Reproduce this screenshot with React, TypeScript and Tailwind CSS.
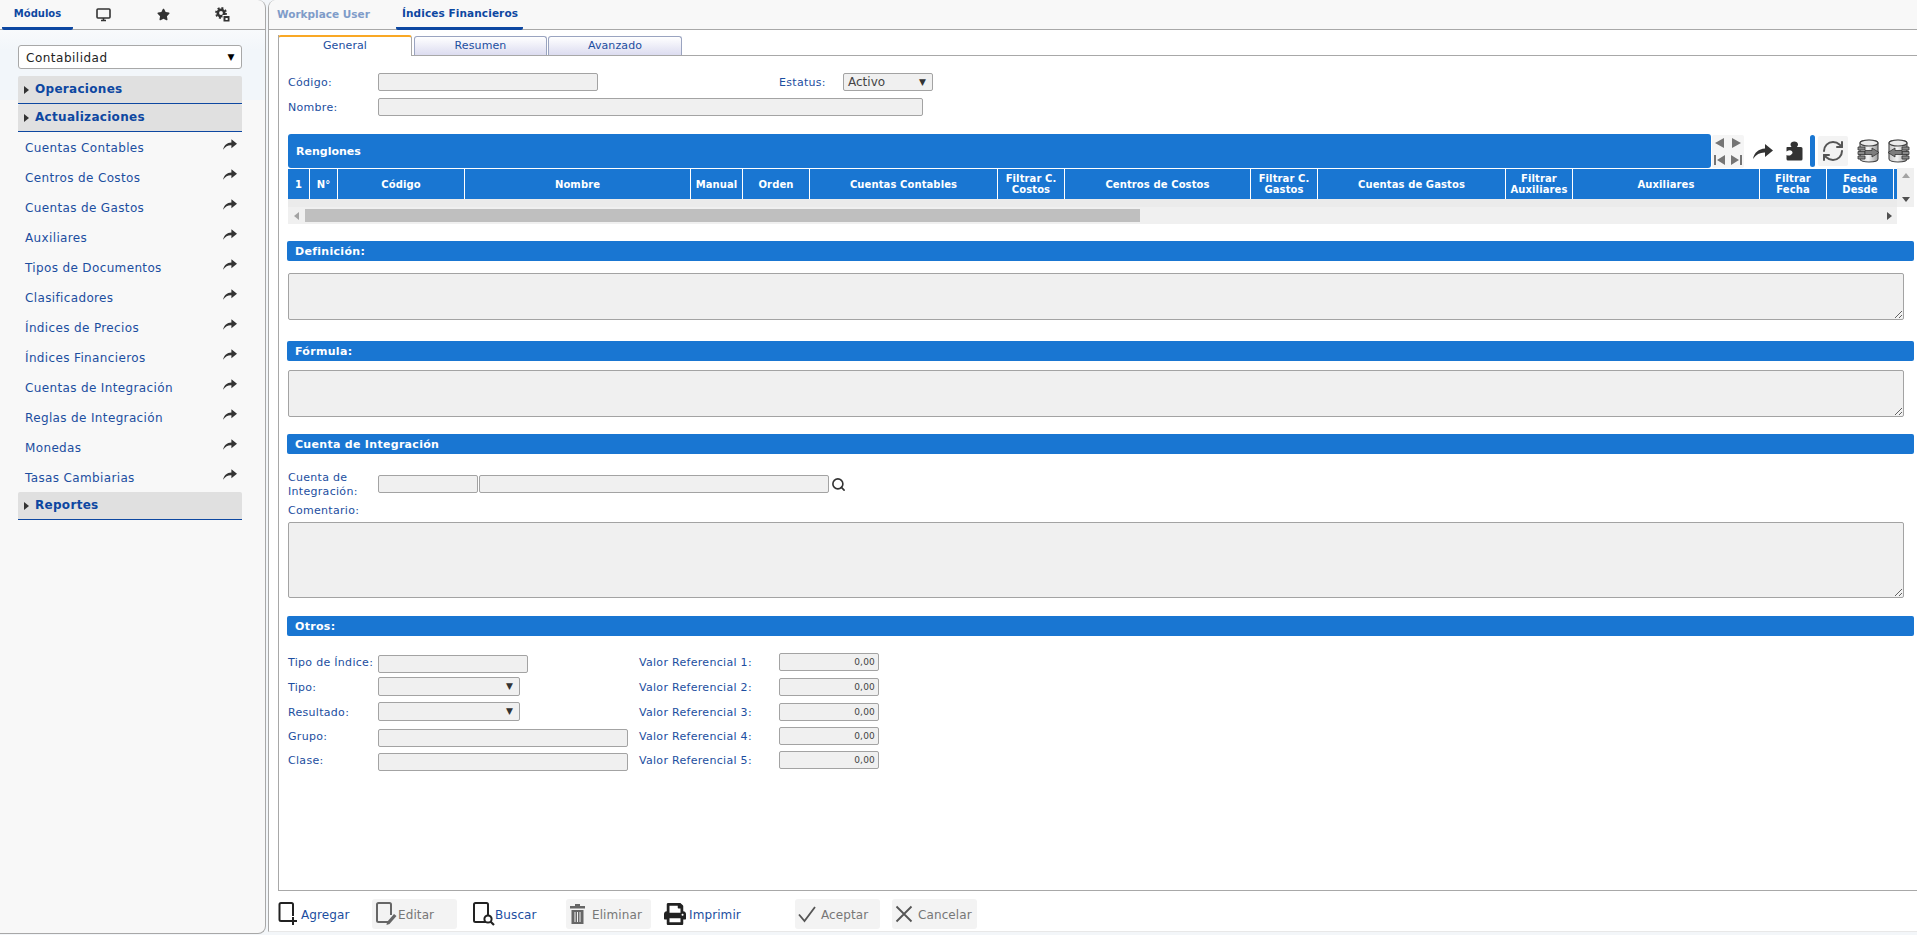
import React from "react";
import { FaStar, FaPrint } from "react-icons/fa";
import { RefreshCw, Search } from "lucide-react";

const menuItems = [
  "Cuentas Contables", "Centros de Costos", "Cuentas de Gastos", "Auxiliares",
  "Tipos de Documentos", "Clasificadores", "Índices de Precios", "Índices Financieros",
  "Cuentas de Integración", "Reglas de Integración", "Monedas", "Tasas Cambiarias",
];

const columns: [string, number][] = [
  ["1", 22], ["N°", 28], ["Código", 127], ["Nombre", 226], ["Manual", 52], ["Orden", 67],
  ["Cuentas Contables", 188], ["Filtrar C. Costos", 67], ["Centros de Costos", 186],
  ["Filtrar C. Gastos", 67], ["Cuentas de Gastos", 188], ["Filtrar Auxiliares", 67],
  ["Auxiliares", 187], ["Filtrar Fecha", 67], ["Fecha Desde", 67],
];

function Caret() {
  return <span className="text-[9px] leading-none text-[#333]">▼</span>;
}

function Share({ w, h, className = "" }: { w: number; h: number; className?: string }) {
  return (
    <svg width={w} height={h} viewBox="0 0 20 15" className={className}>
      <path d="M0 15 C1.5 8.5 5.5 5 12 4.6 V0 L20 6.6 L12 13 V8.6 C7 8.4 3.5 10.5 0 15 Z" fill="#333" />
    </svg>
  );
}

function Puzzle() {
  return (
    <svg width="17" height="20" viewBox="0 0 17 20">
      <path
        d="M1 6 H5.5 C5 5 4.5 4.5 4.5 3.5 C4.5 1.5 6.3 0.5 8.3 0.5 C10.3 0.5 12 1.5 12 3.5 C12 4.5 11.5 5 11 6 H15 Q16.5 6 16.5 7.5 V18 Q16.5 19.5 15 19.5 H2 Q0.5 19.5 0.5 18 V14 C2 14.8 3.6 14.8 4.8 14 C6 13.3 6.5 12.6 6.5 11.6 C6.5 10.2 5.4 9.2 3.9 9.2 C2.8 9.2 1.8 9.6 0.5 10.4 V7 Q0.5 6 1 6 Z"
        fill="#333"
      />
    </svg>
  );
}

function MenuHeader({ label }: { label: string }) {
  return (
    <div className="mx-[18px] w-[224px] h-[28px] flex items-center bg-[#e0e0e0] border-b border-[#0d47a1] pl-[6px] rounded-t-[2px]">
      <svg width="5" height="8" viewBox="0 0 5 8" className="mr-[6px]"><path d="M0 0 L5 4 L0 8 Z" fill="#333" /></svg>
      <span className="text-[12px] font-bold text-[#0d47a1] tracking-[0.3px] pb-[2px]">{label}</span>
    </div>
  );
}

function Field({ w, h = 18, right, ml = 0 }: { w: number; h?: number; right?: string; ml?: number }) {
  return (
    <input
      readOnly
      value={right ?? ""}
      style={{ width: w, height: h, marginLeft: ml }}
      className="shrink-0 bg-[#f0f0f0] border border-[#a3a3a3] rounded-[2px] text-right pr-[3px] text-[9px] tracking-[0.2px] text-[#444] outline-none"
    />
  );
}

function Select({ w, h = 18, text }: { w: number; h?: number; text?: string }) {
  return (
    <div style={{ width: w, height: h }} className="shrink-0 bg-[#f0f0f0] border border-[#a3a3a3] rounded-[2px] flex items-center justify-between pl-[4px] pr-[6px] text-[12px] text-[#444]">
      <span>{text}</span>
      <Caret />
    </div>
  );
}

function Section({ title, className }: { title: string; className: string }) {
  return (
    <div className={`w-[1627px] -ml-px h-[20px] bg-[#1976d2] rounded-[2px] flex items-center pl-[8px] pt-[2px] text-white text-[11px] tracking-[0.3px] font-bold ${className}`}>
      {title}
    </div>
  );
}

function Area({ h, className }: { h: number; className: string }) {
  return (
    <textarea
      readOnly
      style={{ height: h }}
      className={`block w-[1616px] bg-[#f0f0f0] border border-[#a3a3a3] rounded-[2px] outline-none ${className}`}
    />
  );
}

function Tri({ d }: { d: string }) {
  return (
    <svg width="12" height="12" viewBox="0 0 12 12"><path d={d} fill="#757575" /></svg>
  );
}

function Db({ out }: { out: boolean }) {
  const id = out ? "dbA" : "dbB";
  return (
    <svg width="24" height="26" viewBox="0 0 24 26">
      <defs>
        <linearGradient id={id} x1="0" x2="1" y1="0" y2="0">
          <stop offset="0" stopColor="#c4c4c4" />
          <stop offset="0.45" stopColor="#f4f4f4" />
          <stop offset="1" stopColor="#9c9c9c" />
        </linearGradient>
      </defs>
      <path d="M3 5 C3 1.5 21 1.5 21 5 L21 21 C21 25 3 25 3 21 Z" fill={`url(#${id})`} stroke="#444" strokeWidth="1.1" />
      <ellipse cx="12" cy="5" rx="9" ry="3" fill="#ececec" stroke="#444" strokeWidth="1.1" />
      {out ? (
        <>
          <path d="M1 9 H8 V12 H1 Z M1 13.5 H8 V16.5 H1 Z M1 18 H8 V21 H1 Z" fill="#8a8a8a" stroke="#333" strokeWidth="0.8" />
          <path d="M8 12.5 H15 V10 L22 14.5 L15 19 V16.5 H8 Z" fill="#7d7d7d" stroke="#333" strokeWidth="0.8" />
        </>
      ) : (
        <>
          <path d="M16 9 H23 V12 H16 Z M16 13.5 H23 V16.5 H16 Z M16 18 H23 V21 H16 Z" fill="#8a8a8a" stroke="#333" strokeWidth="0.8" />
          <path d="M16 12.5 H9 V10 L2 14.5 L9 19 V16.5 H16 Z" fill="#7d7d7d" stroke="#333" strokeWidth="0.8" />
        </>
      )}
    </svg>
  );
}

function DocIcon({ color, children }: { color: string; children?: React.ReactNode }) {
  return (
    <svg width="24" height="26" viewBox="0 0 24 26" fill="none" className="shrink-0">
      <path d="M14 21 H3.5 Q2 21 2 19.5 V3.5 Q2 2 3.5 2 H14.5 Q16 2 16 3.5 V14" stroke={color} strokeWidth="2" />
      {children}
    </svg>
  );
}

function Action({ icon, label, w, disabled, gap = 3, className = "" }: { icon: React.ReactNode; label: string; w: number; disabled?: boolean; gap?: number; className?: string }) {
  return (
    <div
      style={{ width: w }}
      className={`h-[30px] shrink-0 flex items-center pl-[3px] rounded-[3px] text-[12px] tracking-[0.1px] ${disabled ? "bg-[#f3f3f3] text-[#777]" : "text-[#1c4ea0]"} ${className}`}
    >
      {icon}
      <span style={{ marginLeft: gap }} className="pt-[2px]">{label}</span>
    </div>
  );
}

export default function App() {
  const labelCls = "text-[11px] text-[#1c4ea0] shrink-0 tracking-[0.3px]";
  const rows: [React.ReactNode, string, React.ReactNode, string][] = [
    ["Tipo de Índice:", "h-[18px]", <Field w={150} />, "1"],
    ["Tipo:", "h-[19px]", <Select w={142} h={19} />, "2"],
    ["Resultado:", "h-[19px]", <Select w={142} h={19} />, "3"],
    ["Grupo:", "h-[18px]", <Field w={250} />, "4"],
    ["Clase:", "h-[18px]", <Field w={250} />, "5"],
  ];
  return (
    <div className="flex w-[1917px] h-[935px] overflow-hidden bg-[#f3f6f9] [font-family:'DejaVu_Sans',sans-serif]">
      {/* Sidebar */}
      <aside className="w-[266px] h-[934px] shrink-0 border-r border-b border-[#a8a8a8] rounded-r-[8px] flex flex-col bg-[linear-gradient(180deg,#f8f8f8_0,#f8f8f8_29px,#f8fafc_30px,#f2f6fa_50px,#f2f6fa_100px,#f8f8f8_100px)]">
        <div className="h-[30px] shrink-0 border-b border-[#a8a8a8] flex">
          <div className="ml-[2px] w-[71px] h-[30px] rounded-b-[2px] border-b-[3px] border-[#0d47a1] flex items-center justify-center text-[10px] font-bold text-[#0d47a1]">Módulos</div>
          <div className="w-[60px] flex items-center justify-center text-[#333]">
            <svg width="15" height="14" viewBox="0 0 15 14" fill="none">
              <rect x="1" y="1" width="13" height="9" rx="1" stroke="#333" strokeWidth="1.6" />
              <path d="M5 12.5 H10 M7.5 10 V12.5" stroke="#333" strokeWidth="1.6" />
            </svg>
          </div>
          <div className="w-[60px] flex items-center justify-center text-[#333]"><FaStar size={13} /></div>
          <div className="w-[60px] flex items-center justify-center">
            <svg width="16" height="16" viewBox="0 0 16 16" fill="none">
              <circle cx="6" cy="6" r="3.2" stroke="#333" strokeWidth="2.6" />
              <circle cx="6" cy="6" r="5" stroke="#333" strokeWidth="1.8" strokeDasharray="2 1.9" />
              <rect x="8" y="8.5" width="7" height="6.5" fill="#333" stroke="#f8f8f8" strokeWidth="1" />
              <rect x="10.5" y="11" width="2.2" height="2" fill="#f8f8f8" />
            </svg>
          </div>
        </div>
        <div className="mx-[18px] mt-[15px] w-[224px] h-[24px] bg-white border border-[#a8a8a8] rounded-[3px] flex items-center justify-between pl-[7px] pr-[6px] text-[12px] tracking-[0.5px] text-[#222] shrink-0">
          <span className="pt-[1px]">Contabilidad</span>
          <span className="text-[9px] leading-none text-black">▼</span>
        </div>
        <div className="mt-[7px]"><MenuHeader label="Operaciones" /></div>
        <MenuHeader label="Actualizaciones" />
        <div className="flex flex-col">
          {menuItems.map((m) => (
            <div key={m} className="mx-[18px] w-[224px] h-[30px] flex items-center justify-between pl-[7px] pr-[5px] text-[12px] tracking-[0.36px] text-[#1c4ea0]">
              <span className="pt-[2px]">{m}</span>
              <Share w={14} h={11} className="mb-[6px]" />
            </div>
          ))}
        </div>
        <MenuHeader label="Reportes" />
      </aside>

      {/* Main */}
      <main className="ml-[2px] flex-1 h-[932px] bg-white border-l border-b border-l-[#a8a8a8] border-b-[#e8e8e8] rounded-tl-[8px] flex flex-col">
        <div className="h-[30px] shrink-0 bg-[#f8f8f8] border-b border-[#a8a8a8] rounded-tl-[8px] flex pl-[3px]">
          <div className="w-[124px] flex items-center pl-[5px] text-[10.5px] font-bold text-[#7f9cc9]">Workplace User</div>
          <div className="w-[127px] h-[30px] border-b-[3px] border-[#0d47a1] rounded-b-[2px] flex items-center pl-[6px] text-[10.5px] tracking-[0.1px] font-bold text-[#0d47a1] whitespace-nowrap">Índices Financieros</div>
        </div>

        {/* Panel */}
        <div className="ml-[9px] mt-[5px] h-[856px] shrink-0 border-l border-b border-[#a8a8a8] flex flex-col">
          <div className="h-[21px] shrink-0 flex items-end border-b border-[#a8a8a8] -ml-px">
            <div className="w-[134px] h-[21px] -mb-px bg-white border-t-2 border-t-[#f9a825] border-x border-x-[#a8a8a8] rounded-t-[3px] flex items-center justify-center text-[11px] tracking-[0.1px] text-[#1c4ea0]">General</div>
            <div className="ml-[2px] w-[133px] h-[19px] border border-[#9aa4c0] border-b-0 rounded-t-[3px] bg-[linear-gradient(180deg,#ffffff,#dcdcf0)] flex items-center justify-center text-[11px] tracking-[0.1px] text-[#1c4ea0]">Resumen</div>
            <div className="ml-px w-[134px] h-[19px] border border-[#9aa4c0] border-b-0 rounded-t-[3px] bg-[linear-gradient(180deg,#ffffff,#dcdcf0)] flex items-center justify-center text-[11px] tracking-[0.1px] text-[#1c4ea0]">Avanzado</div>
          </div>

          <div className="pl-[9px] flex flex-col flex-1">
            <div className="mt-[17px] flex items-center h-[18px]">
              <span className={`${labelCls} w-[90px] pt-[3px]`}>Código:</span>
              <Field w={220} />
              <span className={`${labelCls} ml-[181px] w-[64px] pt-[3px]`}>Estatus:</span>
              <Select w={90} text="Activo" />
            </div>
            <div className="mt-[7px] flex items-center h-[18px]">
              <span className={`${labelCls} w-[90px] pt-[3px]`}>Nombre:</span>
              <Field w={545} />
            </div>

            {/* Grid */}
            <div className="mt-[18px] flex h-[34px] w-[1626px]">
              <div className="w-[1423px] h-[34px] bg-[#1976d2] rounded-[3px] flex items-center pl-[8px] pt-[2px] text-white text-[11px] font-bold">Renglones</div>
              <div className="ml-[1px] w-[32px] h-[33px] mt-[1px] bg-[#f5f5f5] rounded-[2px] grid grid-cols-2 place-items-center">
                <Tri d="M10 1 V11 L1 6 Z" />
                <Tri d="M2 1 V11 L11 6 Z" />
                <Tri d="M0 1 H2 V11 H0 Z M11 1 V11 L3 6 Z" />
                <Tri d="M12 1 H10 V11 H12 Z M1 1 V11 L9 6 Z" />
              </div>
              <div className="ml-[8px] w-[22px] h-[34px] flex items-center justify-center"><Share w={20} h={15} /></div>
              <div className="ml-[10px] w-[20px] h-[34px] flex items-center justify-center"><Puzzle /></div>
              <div className="ml-[6px] w-[5px] h-[32px] mt-[1px] bg-[#1976d2] rounded-[3px]" />
              <div className="ml-[3px] w-[30px] h-[30px] mt-[2px] bg-[#f3f3f3] rounded-[2px] flex items-center justify-center text-[#555]"><RefreshCw size={24} strokeWidth={2} /></div>
              <div className="ml-[9px] w-[24px] h-[34px] flex items-center justify-center"><Db out /></div>
              <div className="ml-[5px] w-[24px] h-[34px] flex items-center justify-center"><Db out={false} /></div>
            </div>
            <div className="flex w-[1626px]">
              <div className="w-[1609px]">
                <div className="flex h-[31px] border-t border-white bg-[#1976d2]">
                  {columns.map(([name, w]) => (
                    <div key={name} style={{ width: w }} className="shrink-0 border-r border-white flex items-center justify-center text-center text-white text-[10px] tracking-[0.1px] leading-[11px] font-bold">
                      <span className="block">{name}</span>
                    </div>
                  ))}
                </div>
                <div className="h-[8px] bg-[#ebebeb]" />
                <div className="h-[17px] bg-[#f0f0f0] flex items-center">
                  <div className="w-[17px] flex justify-center">
                    <svg width="5" height="8" viewBox="0 0 5 8"><path d="M5 0 L0 4 L5 8 Z" fill="#a3a3a3" /></svg>
                  </div>
                  <div className="w-[835px] h-[13px] bg-[#bfbfbf]" />
                  <div className="flex-1 flex justify-end pr-[5px]">
                    <svg width="5" height="8" viewBox="0 0 5 8"><path d="M0 0 L5 4 L0 8 Z" fill="#505050" /></svg>
                  </div>
                </div>
              </div>
              <div className="w-[17px] h-[39px] bg-[#f0f0f0] flex flex-col items-center justify-between py-[5px]">
                <svg width="8" height="5" viewBox="0 0 8 5"><path d="M0 5 L4 0 L8 5 Z" fill="#a3a3a3" /></svg>
                <svg width="8" height="5" viewBox="0 0 8 5"><path d="M0 0 L4 5 L8 0 Z" fill="#505050" /></svg>
              </div>
            </div>

            <Section title="Definición:" className="mt-[17px]" />
            <Area h={47} className="mt-[12px]" />
            <Section title="Fórmula:" className="mt-[21px]" />
            <Area h={47} className="mt-[9px]" />
            <Section title="Cuenta de Integración" className="mt-[17px]" />

            <div className="mt-[21px] flex items-center h-[18px]">
              <span className={`${labelCls} w-[90px] leading-[14px] pt-[2px]`}>Cuenta de<br />Integración:</span>
              <Field w={100} />
              <Field w={350} ml={1} />
              <Search size={15} strokeWidth={2.6} className="ml-[2px] text-[#333]" />
            </div>
            <div className={`${labelCls} mt-[10px] h-[14px] leading-[14px] pt-[1px]`}>Comentario:</div>
            <Area h={76} className="mt-[5px]" />
            <Section title="Otros:" className="mt-[18px]" />

            <div className="mt-[17px] flex flex-col gap-y-[6px]">
              {rows.map(([label, hCls, ctrl, n]) => (
                <div key={n} className={`flex items-center ${hCls}`}>
                  <span className={`${labelCls} w-[90px] pt-[3px]`}>{label}</span>
                  <div className="w-[261px] shrink-0">{ctrl}</div>
                  <span className={`${labelCls} w-[140px] pt-[3px]`}>{`Valor Referencial ${n}:`}</span>
                  <Field w={100} right="0,00" />
                </div>
              ))}
            </div>
          </div>
        </div>

        {/* Toolbar */}
        <div className="ml-[9px] mt-[8px] flex items-center h-[30px]">
          <Action w={94} gap={2} label="Agregar" icon={
            <svg width="21" height="26" viewBox="0 0 21 26" fill="none" className="-ml-[3px]">
              <path d="M12 20 H3 Q1.5 20 1.5 18.5 V3.5 Q1.5 2 3 2 H13.5 Q15 2 15 3.5 V15" stroke="#222" strokeWidth="2" />
              <path d="M15 16 V24 M11 20 H19" stroke="#222" strokeWidth="2" />
            </svg>
          } />
          <Action w={85} disabled gap={-1} label="Editar" icon={
            <DocIcon color="#666"><path d="M12 21 L19 13 L21.5 15 L14.5 23 L11.5 24 Z" fill="#666" /></DocIcon>
          } />
          <Action w={97} className="ml-[12px]" gap={-1} label="Buscar" icon={
            <DocIcon color="#222"><circle cx="16" cy="18" r="3.6" stroke="#222" strokeWidth="2" /><path d="M18.5 20.5 L22 24" stroke="#222" strokeWidth="2.2" /></DocIcon>
          } />
          <Action w={85} disabled gap={6} label="Eliminar" icon={
            <svg width="17" height="22" viewBox="0 0 17 22"><path d="M1 3 H6 V1 H11 V3 H16 V5.5 H1 Z M2.5 7 H14.5 V21 H2.5 Z" fill="#666" /><path d="M6 9 V19 M8.5 9 V19 M11 9 V19" stroke="#f3f3f3" strokeWidth="1" /></svg>
          } />
          <Action w={134} className="ml-[10px]" label="Imprimir" icon={<FaPrint size={22} className="text-[#222]" />} />
          <Action w={85} disabled gap={5} label="Aceptar" icon={
            <svg width="18" height="18" viewBox="0 0 18 18" fill="none"><path d="M1 9.5 L6.5 16 L17 2" stroke="#555" strokeWidth="1.8" /></svg>
          } />
          <Action w={85} disabled className="ml-[12px]" gap={5} label="Cancelar" icon={
            <svg width="18" height="18" viewBox="0 0 18 18" fill="none"><path d="M1.5 1.5 L16.5 16.5 M16.5 1.5 L1.5 16.5" stroke="#555" strokeWidth="1.8" /></svg>
          } />
        </div>
      </main>
    </div>
  );
}
